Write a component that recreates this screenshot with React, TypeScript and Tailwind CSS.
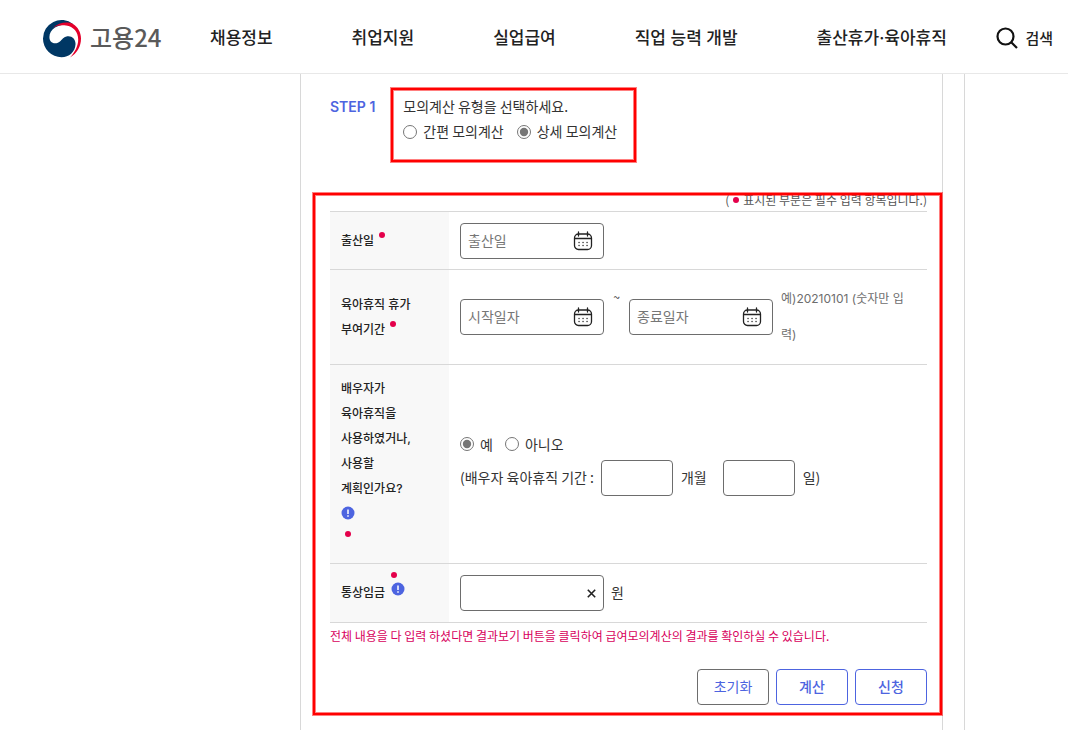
import React from "react";

const NAV = ["채용정보", "취업지원", "실업급여", "직업 능력 개발", "출산휴가·육아휴직"];

const FIELD = "h-9 rounded border border-[#6d6d6d] bg-white text-[#333]";

function Emblem() {
  return (
    <svg width="40" height="40" viewBox="0 0 40 40" aria-hidden="true">
      <path d="M31 5A18.500 18.500 0 0 0 1 19.700A18.500 18.500 0 0 0 19.500 38.200C27 38.200 33 33 33.500 25.500C33.800 20.500 30.500 17.300 26.500 17.300C22.500 17.300 21 19.500 18.500 22C15.500 25 11 25 8.800 22.500C6 18.500 7.500 12 13 8.500C18 5.500 25 4.500 31 5Z" fill="#003764" />
      <path d="M11 9C17 3 26 2.500 31 5C36 8 39 13.500 39 19.500C39 27.500 35 34.500 28 38.500C33 33 36.200 27 36.200 20.500C36.200 13 31.500 7.500 24 6.500C19 6 15 6.500 11 9Z" fill="#e4002b" />
    </svg>
  );
}

function Calendar() {
  return (
    <svg width="20" height="20" viewBox="0 0 20 20" fill="none" stroke="#222" strokeLinecap="round" aria-hidden="true">
      <rect x="1.500" y="3" width="17" height="15.500" rx="4" strokeWidth="1.300" />
      <path d="M2 7.500H18M5.500 1V5M14.500 1V5" strokeWidth="1.300" />
      <path d="M6 11.500H6.100M10 11.500H10.100M14 11.500H14.100M6 14.500H6.100M10 14.500H10.100M14 14.500H14.100" strokeWidth="1.300" />
    </svg>
  );
}

function Dot() {
  return <span className="inline-block size-[6px] shrink-0 rounded-full bg-[#e4004b]" />;
}

function Info() {
  return (
    <svg width="14" height="14" viewBox="0 0 14 14" role="img" aria-label="도움말">
      <circle cx="7" cy="7" r="6.500" fill="#4d64e0" />
      <path d="M7 3.500V8M7 9.300V10.700" stroke="#fff" strokeWidth="1.500" />
    </svg>
  );
}

function DateField({ id, label }: { id: string; label: string }) {
  return (
    <div className={"flex w-36 shrink-0 items-center pr-[10px] pl-[7px] " + FIELD}>
      <input id={id} aria-label={label} placeholder={label} className="min-w-0 flex-1 bg-transparent pb-[2px] text-sm outline-none placeholder:text-[#767676]" />
      <button type="button" aria-label={label + " 달력"}><Calendar /></button>
    </div>
  );
}

function Radio({ name, label, checked }: { name: string; label: string; checked?: boolean }) {
  return (
    <label className="flex items-center gap-[6px]">
      <input type="radio" name={name} defaultChecked={checked} className="size-[14px] accent-[#767676]" />
      {label}
    </label>
  );
}

function Row({ height, head, children }: { height: string; head: React.ReactNode; children: React.ReactNode }) {
  return (
    <tr className={"border-b border-[#d8d8d8] " + height}>
      <th scope="row" className="bg-[#f8f8f8] px-[11px] pb-px text-left align-middle font-['Inter','Noto_Sans_CJK_KR',sans-serif] text-xs leading-[25px] font-medium text-[#222]">{head}</th>
      <td className="py-[10px] pl-[11px] align-middle">{children}</td>
    </tr>
  );
}

const FRAME = "pointer-events-none absolute border-2 border-[#ff0000] shadow-[0_0_0_1px_rgba(255,0,0,0.5),inset_0_0_0_1px_rgba(255,0,0,0.5)]";

export default function App() {
  return (
    <div className="flex min-h-screen flex-col bg-white font-['Noto_Sans_CJK_KR',sans-serif] text-sm text-[#333]">
      <header className="flex h-[74px] shrink-0 items-center border-b border-[#e8e8e8] pt-1 pr-[15px] pl-[42px]">
        <a href="#" className="flex w-[168px] shrink-0 items-center gap-2 text-2xl font-medium text-[#5a5a5a]">
          <Emblem />
          <span className="pb-1">고용24</span>
        </a>
        <nav className="flex gap-[79px] font-['Inter','Noto_Sans_CJK_KR',sans-serif] text-[17px] font-medium whitespace-nowrap text-[#222]">
          {NAV.map((n) => <a key={n} href="#">{n}</a>)}
        </nav>
        <button type="button" className="ml-auto flex items-center gap-[7px] text-[15px] font-medium whitespace-nowrap text-[#222]">
          <svg width="22" height="22" viewBox="0 0 22 22" fill="none" stroke="#111" strokeWidth="2.200" aria-hidden="true">
            <circle cx="9.500" cy="9.500" r="8" />
            <path d="M15.200 15.200L21 21" />
          </svg>
          <span className="pb-[2px]">검색</span>
        </button>
      </header>

      <div className="flex flex-1">
        <div className="w-[300px] shrink-0" />
        <main className="min-w-0 flex-1 border-x border-[#d8d8d8] pt-5 pr-[15px] pl-[29px]">
          <section className="flex h-[94px] items-start gap-[28px] leading-[25px]">
            <h2 className="font-['Inter','Noto_Sans_CJK_KR',sans-serif] font-semibold text-[#4d64e0]">STEP 1</h2>
            <fieldset className="relative">
              <legend className="float-left">모의계산 유형을 선택하세요.</legend>
              <div className="clear-both flex gap-[13px]">
                <Radio name="kind" label="간편 모의계산" />
                <Radio name="kind" label="상세 모의계산" checked />
              </div>
              <div className={FRAME + " -top-[6px] -right-[19px] -bottom-[18px] -left-[12px]"} />
            </fieldset>
          </section>

          <form className="relative">
            <p className="flex h-[23px] items-center justify-end gap-1 text-xs text-[#555]">
              ( <Dot /> 표시된 부분은 필수 입력 항목입니다.)
            </p>
            <table className="w-full border-collapse border-t border-[#d8d8d8]">
              <colgroup><col className="w-[119px]" /><col /></colgroup>
              <tbody>
                <Row height="h-[58px]" head={<span className="flex gap-[5px]">출산일<span className="flex pt-1"><Dot /></span></span>}>
                  <DateField id="birth" label="출산일" />
                </Row>
                <Row height="h-[95px]" head={<>육아휴직 휴가<span className="flex gap-[5px]">부여기간<span className="flex pt-1"><Dot /></span></span></>}>
                  <div className="flex items-center">
                    <DateField id="start" label="시작일자" />
                    <span className="w-[25px] shrink-0 self-start text-center text-xs leading-8">~</span>
                    <DateField id="end" label="종료일자" />
                    <span className="ml-2 w-[134px] font-['Inter','Noto_Sans_CJK_KR',sans-serif] text-xs leading-9 text-[#6d6d6d]">예)20210101 (숫자만 입력)</span>
                  </div>
                </Row>
                <Row height="h-[199px]" head={
                  <>
                    배우자가<br />육아휴직을<br />사용하였거나,<br />사용할<br />계획인가요?
                    <span className="flex h-[25px] items-center"><Info /></span>
                    <span className="flex h-[26px] pt-[5px] pl-1"><Dot /></span>
                  </>
                }>
                  <div className="flex flex-col gap-1">
                    <div className="flex h-6 items-center gap-3">
                      <Radio name="spouse" label="예" checked />
                      <Radio name="spouse" label="아니오" />
                    </div>
                    <div className="flex items-center gap-[7px] whitespace-nowrap">
                      <span className="pb-[2px]">(배우자 육아휴직 기간 :</span>
                      <input aria-label="개월" className={"w-[72px] px-2 " + FIELD} />
                      <span className="mr-[9px] pb-[2px] pl-px">개월</span>
                      <input aria-label="일" className={"w-[72px] px-2 " + FIELD} />
                      <span className="pb-[2px] pl-px">일)</span>
                    </div>
                  </div>
                </Row>
                <Row height="h-[59px]" head={
                  <span className="flex items-center gap-[6px]">
                    통상임금
                    <span className="flex flex-col gap-1 pb-[18px]"><Dot /><Info /></span>
                  </span>
                }>
                  <div className="flex items-center gap-[7px]">
                    <div className={"flex w-36 items-center pr-[7px] pl-2 " + FIELD}>
                      <input id="wage" aria-label="통상임금" className="min-w-0 flex-1 bg-transparent outline-none" />
                      <button type="button" aria-label="지우기">
                        <svg width="9" height="9" viewBox="0 0 9 9" stroke="#222" strokeWidth="1.600" aria-hidden="true"><path d="M0.800 0.800L8.200 8.200M8.200 0.800L0.800 8.200" /></svg>
                      </button>
                    </div>
                    <label htmlFor="wage" className="pb-[2px]">원</label>
                  </div>
                </Row>
              </tbody>
            </table>
            <p className="text-xs leading-[26px] text-[#d8005c]">전체 내용을 다 입력 하셨다면 결과보기 버튼을 클릭하여 급여모의계산의 결과를 확인하실 수 있습니다.</p>
            <div className="mt-5 flex justify-end gap-[7px] text-[#4d64e0]">
              <button type="reset" className="h-9 w-[72px] rounded border border-[#6d6d6d] pb-[2px]">초기화</button>
              <button type="button" className="h-9 w-[72px] rounded border border-[#4d64e0] pb-[2px] font-medium">계산</button>
              <button type="button" className="h-9 w-[72px] rounded border border-[#4d64e0] pb-[2px] font-medium">신청</button>
            </div>
            <div className={FRAME + " top-[5px] -right-[15px] -bottom-[10px] -left-[17px]"} />
          </form>
        </main>
        <div className="w-[21px] shrink-0" />
        <div className="w-[104px] shrink-0 border-l border-[#d8d8d8]" />
      </div>
    </div>
  );
}
